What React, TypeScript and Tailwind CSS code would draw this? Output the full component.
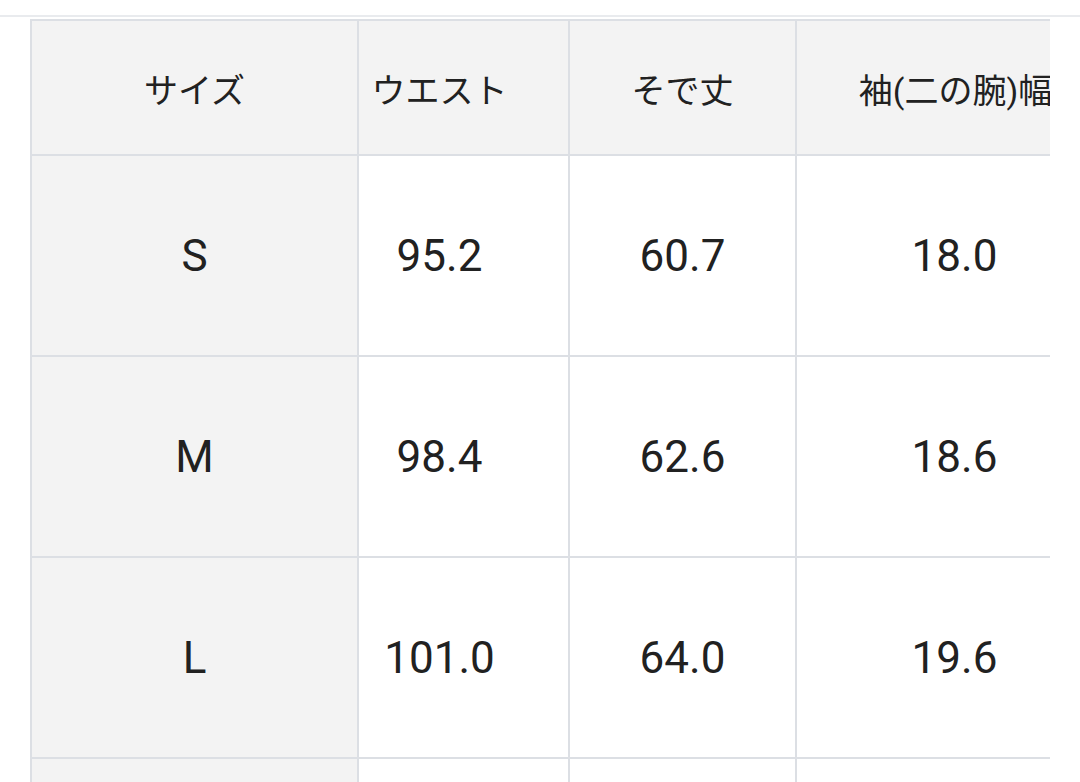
import React from "react";

const rows = [
  ["S", "95.2", "60.7", "18.0"],
  ["M", "98.4", "62.6", "18.6"],
  ["L", "101.0", "64.0", "19.6"],
  ["", "", "", ""],
];

export default function App() {
  return (
    <div
      className="w-[1080px] h-[782px] bg-white overflow-hidden text-[#212121]"
      style={{ fontFamily: 'Roboto, "Noto Sans CJK JP", sans-serif' }}
    >
      <div className="h-[15px]" />
      <div className="h-[2px] bg-[#e9ebee]" />
      <div className="h-[2px]" />
      <div className="ml-[30px] w-[1020px] overflow-hidden">
        <div className="grid grid-cols-[325px_209px_225px_315px] gap-[2px] p-[2px] bg-[#dcdfe4] w-max">
          <div className="h-[133px] bg-[#f3f3f3] flex items-center justify-center text-[34px] pt-[7px]">
            サイズ
          </div>
          <div className="h-[133px] bg-[#f3f3f3] flex items-center justify-center text-[34px] pt-[7px] pr-[48px]">
            ウエスト
          </div>
          <div className="h-[133px] bg-[#f3f3f3] flex items-center justify-center text-[34px] pt-[7px]">
            そで丈
          </div>
          <div className="h-[133px] bg-[#f3f3f3] flex items-center justify-center text-[34px] pt-[7px] pl-[2px] whitespace-nowrap">
            袖(二の腕)幅
          </div>
          {rows.map((r, i) => (
            <React.Fragment key={i}>
              <div className="h-[199px] bg-[#f3f3f3] flex items-center justify-center text-[44px]">
                {r[0]}
              </div>
              <div className="h-[199px] bg-white flex items-center justify-center text-[44px] pr-[48px]">
                {r[1]}
              </div>
              <div className="h-[199px] bg-white flex items-center justify-center text-[44px]">
                {r[2]}
              </div>
              <div className="h-[199px] bg-white flex items-center justify-center text-[44px]">
                {r[3]}
              </div>
            </React.Fragment>
          ))}
        </div>
      </div>
    </div>
  );
}
